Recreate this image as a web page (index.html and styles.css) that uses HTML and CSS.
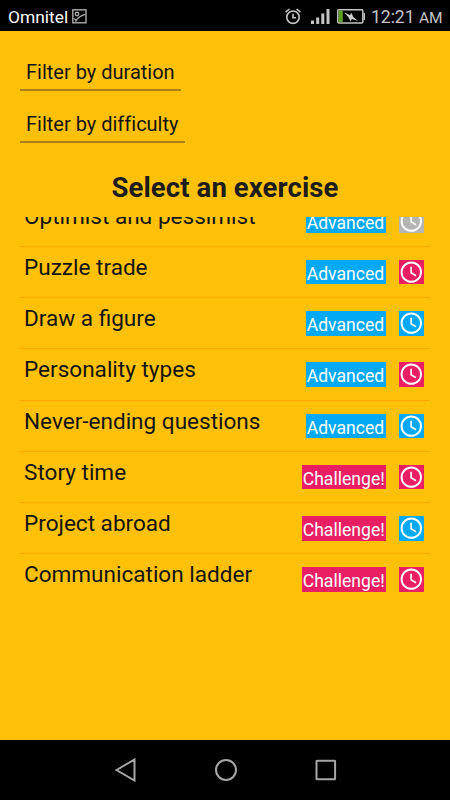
FILE: index.html
```html
<!DOCTYPE html>
<html lang="en">
<head>
<meta charset="utf-8">
<title>Select an exercise</title>
<link rel="stylesheet" href="styles.css">
</head>
<body>
<svg class="defs" width="0" height="0" aria-hidden="true">
  <symbol id="clock" viewBox="0 0 25 25">
    <circle cx="12.3" cy="12.4" r="9.9" fill="none" stroke="#fff" stroke-width="2"/>
    <path d="M12.1 7v6l5 3" fill="none" stroke="#fff" stroke-width="1.7"/>
  </symbol>
</svg>
<header class="status">
  <span class="carrier">Omnitel</span>
  <svg class="shot" width="15" height="15" viewBox="0 0 15 15" fill="none" stroke="#aaa" stroke-width="1.4">
    <rect x=".8" y=".8" width="13.2" height="13"/>
    <circle cx="5" cy="5" r="1.7"/>
    <path d="M3.500 12.800C5.500 8 9.500 6.500 13.500 5.200M1.500 9.500L4.200 11"/>
  </svg>
  <div class="indicators">
    <svg class="alarm" width="16" height="17" viewBox="0 0 16 17" fill="none" stroke="#c4c4c4" stroke-width="1.6">
      <circle cx="8" cy="9.2" r="6.2"/>
      <path d="M8 5.8v4h3M.6 4.2L4.4 1M15.4 4.2L11.6 1"/>
    </svg>
    <svg class="signal" width="19" height="16" viewBox="0 0 19 16" fill="#c4c4c4">
      <path d="M0 12.500h3V16H0zM5.200 9.500h3V16h-3zM10.300 5.500h3V16h-3zM15.500 1h3v15h-3z"/>
    </svg>
    <svg class="battery" width="29" height="15" viewBox="0 0 29 15">
      <rect x=".8" y=".8" width="25" height="13.2" rx="1" fill="none" stroke="#c4c4c4" stroke-width="1.5"/>
      <path d="M26.5 4h1.5v7h-1.5z" fill="#c4c4c4"/>
      <path d="M1.6 1.6h4.2v11.6H1.6z" fill="#5da020"/>
      <path d="M7 3.2l6 3 1.300-2.400 2 4.200 4.700 4-6.200-2-1.300 2.400-2-4.200z" fill="#d0d0d0"/>
    </svg>
    <span class="time">12:21</span><span class="ampm">AM</span>
  </div>
</header>
<main class="screen">
  <div class="filters">
    <div class="filter duration"><span>Filter by duration</span></div>
    <div class="filter difficulty"><span>Filter by difficulty</span></div>
  </div>
  <h1>Select an exercise</h1>
  <div class="viewport">
    <ul class="list">
      <li><span class="name">Optimist and pessimist</span><span class="badge blue adv">Advanced</span><svg class="clock gray"><use href="#clock"/></svg></li>
      <li><span class="name">Puzzle trade</span><span class="badge blue adv">Advanced</span><svg class="clock pink"><use href="#clock"/></svg></li>
      <li><span class="name">Draw a figure</span><span class="badge blue adv">Advanced</span><svg class="clock blue"><use href="#clock"/></svg></li>
      <li><span class="name">Personality types</span><span class="badge blue adv">Advanced</span><svg class="clock pink"><use href="#clock"/></svg></li>
      <li><span class="name">Never-ending questions</span><span class="badge blue adv">Advanced</span><svg class="clock blue"><use href="#clock"/></svg></li>
      <li><span class="name">Story time</span><span class="badge pink chal">Challenge!</span><svg class="clock pink"><use href="#clock"/></svg></li>
      <li><span class="name">Project abroad</span><span class="badge pink chal">Challenge!</span><svg class="clock blue"><use href="#clock"/></svg></li>
      <li><span class="name">Communication ladder</span><span class="badge pink chal">Challenge!</span><svg class="clock pink"><use href="#clock"/></svg></li>
    </ul>
  </div>
</main>
<nav class="navbar">
  <svg width="22" height="24" viewBox="0 0 22 24"><path d="M1.500 12L19.500 1.500v21z"/></svg>
  <svg width="22" height="24" viewBox="0 0 22 24"><circle cx="11" cy="12" r="10"/></svg>
  <svg width="22" height="24" viewBox="0 0 22 24"><rect x="1.500" y="2.700" width="18.600" height="18.600" rx=".5"/></svg>
</nav>
</body>
</html>
```

FILE: styles.css
```css
* { box-sizing: border-box; }
body {
  margin: 0;
  width: 450px;
  height: 800px;
  overflow: hidden;
  display: flex;
  flex-direction: column;
  background: #000;
  font-family: Roboto, sans-serif;
  color: #141414;
}
svg { display: block; flex: none; }
.defs { position: absolute; }
.status {
  height: 31px;
  flex: none;
  display: flex;
  align-items: center;
  padding: 1px 8px 0;
}
.carrier { width: 61px; margin-right: 3px; padding-top: 1px; font-size: 17.4px; color: #fff; white-space: nowrap; }
.indicators {
  margin-left: auto;
  width: 157px;
  display: flex;
  align-items: center;
  color: #c4c4c4;
}
.signal { margin-left: 10px; }
.battery { margin-left: 7px; }
.time { margin-left: 5px; width: 43px; padding-top: 1px; font-size: 17.7px; letter-spacing: -.1px; white-space: nowrap; }
.ampm { margin-left: 5px; padding-top: 3px; font-size: 15.5px; }
.screen {
  height: 709px;
  flex: none;
  display: flex;
  flex-direction: column;
  background: #ffc107;
}
.filters { padding: 20px 20px 0; }
.filter {
  height: 40px;
  margin-bottom: 12px;
  padding-left: 6px;
  border-bottom: 2px solid #a87f12;
  font-size: 20px;
  line-height: 42px;
  white-space: nowrap;
}
.duration { width: 161px; }
.difficulty { width: 165px; font-variant-ligatures: none; }
h1 {
  margin: 9px 0 0;
  height: 48px;
  text-align: center;
  font-size: 27.5px;
  line-height: 48px;
  font-weight: 700;
  letter-spacing: .1px;
  color: #1c1c1c;
}
.viewport { flex: 1; margin: 5px 20px 0; overflow: hidden; }
.list { margin: -21.4px 0 0; padding: 0; list-style: none; }
li {
  height: 51.25px;
  display: flex;
  align-items: flex-start;
  padding: 12.9px 6.5px 0 4px;
  border-bottom: 1px solid #ffa400;
}
li:last-child { border-bottom: 0; }
.name { flex: 1; margin-top: -5px; font-size: 22.55px; line-height: 26px; white-space: nowrap; }
.badge {
  height: 24.5px;
  margin-right: 13px;
  font-size: 17.6px;
  line-height: 28px;
  color: #fff;
  text-align: center;
  white-space: nowrap;
}
.adv { width: 80px; }
.chal { width: 83.5px; }
.clock { width: 25px; height: 24.5px; }
.blue { background: #03a9f4; }
.pink { background: #e91e63; }
.gray { background: #b5b5b5; }
.navbar {
  height: 60px;
  flex: none;
  display: flex;
  justify-content: center;
  align-items: center;
  gap: 78px;
  padding-left: 1px;
}
.navbar svg { fill: none; stroke: #a6a6a6; stroke-width: 2; }
```
